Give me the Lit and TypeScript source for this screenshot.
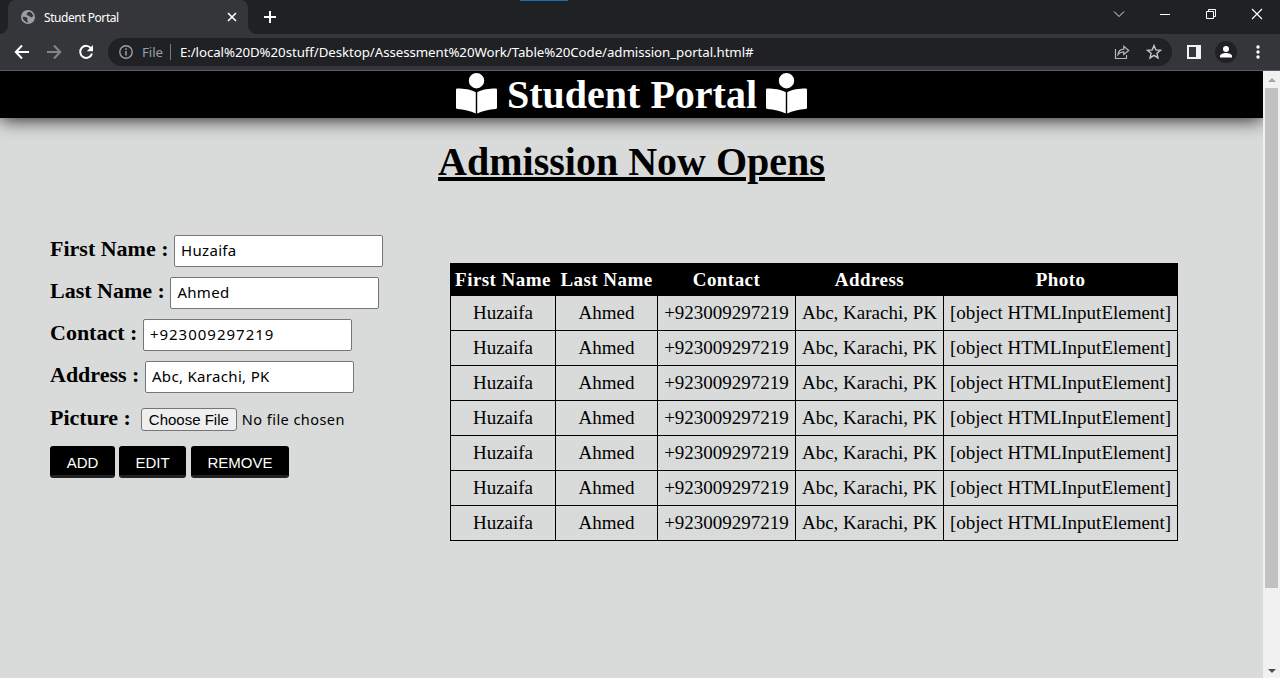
import { LitElement, html, css } from "lit";
import { customElement } from "lit/decorators.js";

const READER = "M160 96a96 96 0 1 1 192 0A96 96 0 1 1 160 96zM247 240V506c-66-36-148-50-231-58-9-1-16-6-16-15V208c0-9 7-15 16-15 85 0 168 9 231 47zm18 266V240c62-38 146-47 231-47 9 0 16 6 16 15V433c0 9-7 14-16 15-83 8-165 22-231 58z";
const reader = () => html`<svg class="reader" viewBox="0 0 512 512"><path fill="#fff" d=${READER}/></svg>`;

const FIELDS: [string, string][] = [
  ["First Name :", "Huzaifa"],
  ["Last Name :", "Ahmed"],
  ["Contact :", "+923009297219"],
  ["Address :", "Abc, Karachi, PK"],
];
const HEADS = ["First Name", "Last Name", "Contact", "Address", "Photo"];
const ROW = ["Huzaifa", "Ahmed", "+923009297219", "Abc, Karachi, PK", "[object HTMLInputElement]"];

@customElement("browser-chrome")
class BrowserChrome extends LitElement {
  static styles = css`
    :host { display: block; height: 71px; font-family: "Noto Sans", sans-serif; color: #fff; background: #35363a; box-sizing: border-box; border-bottom: 1px solid #5b5c60; position: relative; }
    svg { display: block; flex: none; }
    .tabs { height: 34px; background: #202124; display: flex; align-items: stretch; }
    .tab { margin-left: 8px; width: 240px; box-sizing: border-box; background: #35363a; border-radius: 8px 8px 0 0; display: flex; align-items: center; padding: 0 10px 0 13px; position: relative; }
    .tab::before, .tab::after { content: ""; position: absolute; bottom: 0; width: 8px; height: 8px; }
    .tab::before { left: -8px; background: radial-gradient(circle at 0 0, #202124 7.5px, #35363a 8px); }
    .tab::after { right: -8px; background: radial-gradient(circle at 100% 0, #202124 7.5px, #35363a 8px); }
    .title { font-size: 12px; letter-spacing: -0.45px; margin-left: 9px; flex: 1; white-space: nowrap; }
    .plus { margin: 10px 0 0 15px; }
    .win { margin-left: auto; display: flex; align-items: center; height: 28px; }
    .win svg { margin-right: 34px; }
    .win svg:last-child { margin-right: 17px; }
    .accent { position: absolute; left: 520px; top: 0; width: 48px; height: 1px; background: #1b6fae; }
    .bar { height: 36px; display: flex; align-items: center; padding-left: 14px; }
    .nav { margin-right: 16px; }
    .omni { margin-left: -2px; width: 1064px; height: 28px; border-radius: 14px; background: #202124; display: flex; align-items: center; box-sizing: border-box; padding: 0 10px 0 10px; font-size: 13.3px; white-space: nowrap; flex: none; }
    .file { color: #9aa0a6; margin-left: 8px; letter-spacing: -0.1px; }
    .sep { width: 1px; height: 16px; background: #777a7e; margin: 0 9px 0 7px; }
    .url { flex: 1; letter-spacing: -0.075px; }
    .star { margin-left: 16px; }
    .panel { margin-left: 15px; }
    .user { margin-left: 14px; }
    .dots { margin-left: 19px; }
  `;
  render() {
    return html`
      <div class="tabs">
        <div class="tab">
          <svg width="14" height="14" viewBox="0 0 14 14"><circle cx="7" cy="7" r="7" fill="#9aa0a6"/><path d="M1.500 6.800L5 7 6.600 8.500 6 10 7.500 12.400 5.400 12.200 2.400 9.800zM6.500 2.200L9 1.800 11.200 3.400 12.400 6 10.500 7.400 8.800 6.600 7.200 5.600 5.400 5z" fill="#35363a"/></svg>
          <span class="title">Student Portal</span>
          <svg width="12" height="12" viewBox="0 0 12 12"><path d="M2 2l8 8M10 2l-8 8" stroke="#fff" stroke-width="1.6"/></svg>
        </div>
        <svg class="plus" width="14" height="14"><path d="M7 1v12M1 7h12" stroke="#fff" stroke-width="2"/></svg>
        <div class="win">
          <svg width="12" height="12"><path d="M1 3.500l5 5 5-5" fill="none" stroke="#e4e4e4"/></svg>
          <svg width="12" height="12"><path d="M1 6.500h10" stroke="#fff"/></svg>
          <svg width="12" height="12"><path d="M1.500 3.500h7v7h-7zM3.500 3.500v-2h7v7h-2" fill="none" stroke="#fff"/></svg>
          <svg width="12" height="12"><path d="M1 1l10 10M11 1l-10 10" stroke="#fff" stroke-width="1.2"/></svg>
        </div>
        <div class="accent"></div>
      </div>
      <div class="bar">
        <svg class="nav" width="16" height="16"><path d="M15 8H2M8 1.500L1.800 8 8 14.500" fill="none" stroke="#fff" stroke-width="2"/></svg>
        <svg class="nav" width="16" height="16"><path d="M1 8h13M8 1.500L14.200 8 8 14.500" fill="none" stroke="#85868a" stroke-width="2"/></svg>
        <svg class="nav" width="16" height="16"><path d="M13.200 4.500A6 6 0 1 0 14 9.500" fill="none" stroke="#fff" stroke-width="2"/><path d="M15 1v6.200H8.800z" fill="#fff"/></svg>
        <div class="omni">
          <svg width="16" height="16"><circle cx="8" cy="8" r="6.200" fill="none" stroke="#9aa0a6" stroke-width="1.400"/><path d="M8 7v4.500M8 4.300v1.600" stroke="#9aa0a6" stroke-width="1.500"/></svg>
          <span class="file">File</span><span class="sep"></span>
          <span class="url">E:/local%20D%20stuff/Desktop/Assessment%20Work/Table%20Code/admission_portal.html#</span>
          <svg width="16" height="16"><path d="M1.500 5v9.500h11V11M4 10.500C4.500 7 6.500 5.300 9.800 5.200V2.300L14.700 6.500 9.800 10.500V7.900C7.200 7.900 5.500 8.700 4 10.500z" fill="none" stroke="#b4b7bb" stroke-width="1.200"/></svg>
          <svg class="star" width="16" height="16"><path d="M8 1.600l1.800 4.300 4.700.4-3.600 3 1.100 4.600-4-2.500-4 2.500 1.100-4.600-3.600-3 4.700-.4z" fill="none" stroke="#c6c8cb" stroke-width="1.400"/></svg>
        </div>
        <svg class="panel" width="14" height="14"><path d="M0 0h14v14H0zM2 2v10h7V2z" fill="#f1f3f4" fill-rule="evenodd"/></svg>
        <svg class="user" width="22" height="22"><circle cx="11" cy="11" r="11" fill="#202124"/><circle cx="11" cy="8" r="3" fill="#fff"/><path d="M5 16.500v-1.500c0-2 3.500-3 6-3s6 1 6 3v1.500z" fill="#fff"/></svg>
        <svg class="dots" width="4" height="14"><circle cx="2" cy="2" r="1.700" fill="#fff"/><circle cx="2" cy="7" r="1.700" fill="#fff"/><circle cx="2" cy="12" r="1.700" fill="#fff"/></svg>
      </div>`;
  }
}

@customElement("app-root")
class AppRoot extends LitElement {
  static styles = css`
    :host { display: flex; flex-direction: column; width: 1280px; height: 678px; overflow: hidden; font-family: "Liberation Serif", serif; color: #000; }
    svg { display: block; flex: none; }
    .view { flex: 1; display: flex; min-height: 0; }
    .page { width: 1263px; background: #d9dbda; overflow: hidden; }
    .head { height: 47px; background: #000; color: #fff; display: flex; justify-content: center; align-items: center; box-shadow: 0 0 20px #000; font-weight: bold; font-size: 40px; line-height: 47px; }
    .head span { margin: 0 9px 0 10px; white-space: nowrap; }
    .reader { width: 41px; height: 41px; margin-top: -3px; }
    h1 { margin: 21px 0 0; font-size: 40px; line-height: 46px; text-align: center; text-decoration: underline; text-decoration-thickness: 4px; }
    .cols { display: flex; align-items: flex-start; margin-top: 50px; padding-left: 50px; }
    form { width: 400px; }
    .row { display: flex; align-items: center; height: 32px; margin-bottom: 10px; }
    .file { height: 33px; }
    label { font-weight: bold; font-size: 22px; white-space: nowrap; margin-right: 5.500px; padding-bottom: 4px; }
    .file label { padding-bottom: 3px; margin-right: 5px; }
    input { width: 209px; height: 32px; box-sizing: border-box; border: 1px solid #767676; border-radius: 2px; padding: 0 6px 2px; margin: 0; background: #fff; color: #000; font: 15px "Noto Sans", sans-serif; letter-spacing: .32px; }
    .digits { letter-spacing: 1px; }
    .choose { height: 23px; width: 96px; box-sizing: border-box; padding: 0; border: 1px solid #767676; border-radius: 3px; background: #efefef; color: #000; font: 15px "Liberation Sans", sans-serif; margin: 0 5px 1px 5px; white-space: nowrap; }
    .none { font: 14.500px "Noto Sans", sans-serif; letter-spacing: .45px; white-space: nowrap; padding-bottom: 2px; }
    .actions { display: flex; gap: 5px; }
    .actions button { height: 32px; box-sizing: border-box; padding: 3px 0 0; border: 0; border-bottom: 3px solid #222; border-radius: 3px; background: #000; color: #fff; font: 15px "Liberation Sans", sans-serif; }
    .add { width: 65px; } .edit { width: 67px; margin-left: -1px; } .remove { width: 98px; }
    table { margin-top: 28px; border-collapse: collapse; table-layout: fixed; width: 728px; font-size: 19px; }
    th, td { border: 1px solid #000; padding: 0; text-align: center; white-space: nowrap; box-sizing: border-box; }
    th { font-size: 19px; letter-spacing: .45px; line-height: 22px; }
    tr { height: 35px; }
    .hr { height: 32px; background: #000; color: #fff; }
    .c0 { width: 105px; } .c1 { width: 102px; } .c2 { width: 138px; } .c3 { width: 148px; } .c4 { width: 234px; }
    .scroll { width: 17px; background: #f1f1f1; display: flex; flex-direction: column; align-items: center; }
    .up { margin-top: 7px; } .thumb { width: 13px; height: 500px; background: #c1c1c1; margin-top: 6px; } .down { margin: auto 0 5px; }
  `;
  render() {
    return html`
      <browser-chrome></browser-chrome>
      <div class="view">
        <div class="page">
          <div class="head">${reader()}<span>Student Portal</span>${reader()}</div>
          <h1>Admission Now Opens</h1>
          <div class="cols">
            <form>
              ${FIELDS.map(([l, v]) => html`<div class="row"><label>${l}</label><input class=${v.startsWith("+") ? "digits" : "words"} .value=${v}></div>`)}
              <div class="row file"><label>Picture :</label><button type="button" class="choose">Choose File</button><span class="none">No file chosen</span></div>
              <div class="actions"><button type="button" class="add">ADD</button><button type="button" class="edit">EDIT</button><button type="button" class="remove">REMOVE</button></div>
            </form>
            <table>
              <colgroup>${HEADS.map((_, i) => html`<col class="c${i}">`)}</colgroup>
              <tr class="hr">${HEADS.map((h) => html`<th>${h}</th>`)}</tr>
              ${Array.from({ length: 7 }, () => html`<tr>${ROW.map((c) => html`<td>${c}</td>`)}</tr>`)}
            </table>
          </div>
        </div>
        <div class="scroll">
          <svg class="up" width="8" height="4"><path d="M0 4l4-4 4 4z" fill="#a3a3a3"/></svg>
          <div class="thumb"></div>
          <svg class="down" width="8" height="4"><path d="M0 0l4 4 4-4z" fill="#505050"/></svg>
        </div>
      </div>`;
  }
}
